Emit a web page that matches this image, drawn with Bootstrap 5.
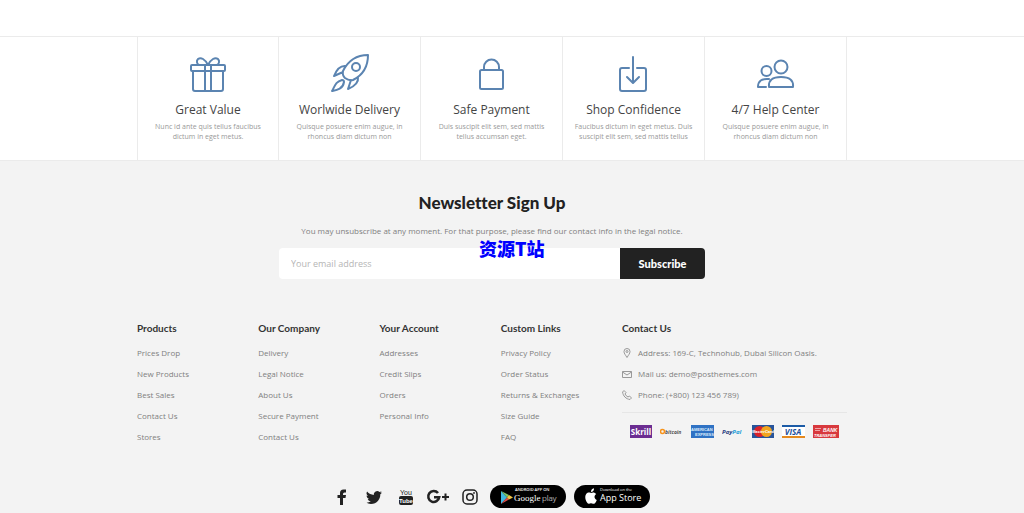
<!DOCTYPE html>
<html lang="en">
<head>
<meta charset="utf-8">
<meta name="viewport" content="width=device-width, initial-scale=1">
<title>Newsletter Sign Up</title>
<link href="https://cdn.jsdelivr.net/npm/bootstrap@5.3.0/dist/css/bootstrap.min.css" rel="stylesheet">
<style>
  body { font-family: "Open Sans", sans-serif; font-size: 8px; line-height: 12px; color: #808080; background: #f3f3f3; overflow-x: hidden; }
  a { color: inherit; text-decoration: none; }
  a:hover { color: #5b84b1; }
  .shell { width: 100%; max-width: 710px; margin: 0 auto; }
  .band { padding-right: 40px; }
  .features { background: #fff; padding-top: 36px; }
  .features-line { border-top: 1px solid #ebebeb; border-bottom: 1px solid #ebebeb; }
  .feature { border-right: 1px solid #ebebeb; padding: 16px 10px 18px; color: #999; }
  .feature:first-child { border-left: 1px solid #ebebeb; }
  .feature svg { width: 40px; height: 40px; fill: none; stroke: #5b84b1; stroke-width: 2; stroke-linejoin: round; stroke-linecap: round; }
  .feature h3 { font-size: 12px; line-height: 16px; font-weight: 400; color: #444; margin: 9px 0 4px; }
  .feature p { font-size: 7px; line-height: 10px; }
  .newsletter { padding-top: 31px; }
  .newsletter h2 { font: 900 17px/22px Lato, sans-serif; font-variant-ligatures: none; color: #222; margin-bottom: 11px; }
  .signup { max-width: 426px; margin: 11px auto 0; height: 31px; }
  .signup .form-control { font-size: 9px; border: 0; border-radius: 4px 0 0 4px; padding: 0 12px; color: #555; }
  .signup .form-control::placeholder { color: #b5b5b5; }
  .signup .btn { width: 85px; background: #222; color: #fff; font: 900 11px/16px Lato, sans-serif; border: 0; border-radius: 0 4px 4px 0; padding: 0; }
  .stamp { position: absolute; left: 200px; top: -10px; font: 900 18px/20px "Noto Sans CJK SC", sans-serif; color: #00f; z-index: 5; white-space: nowrap; }
  .links { display: grid; grid-template-columns: repeat(4, 13fr) 24fr; padding-top: 43px; }
  .links h4 { font: 700 10px/12px Lato, sans-serif; color: #333; margin-bottom: 13px; }
  .links li { line-height: 12px; margin-bottom: 9px; }
  .contact li { display: flex; align-items: center; gap: 6px; }
  .contact li svg { width: 10px; height: 10px; fill: none; stroke: #999; stroke-width: 1; flex: none; }
  .pay { border-top: 1px solid #e6e6e6; margin-top: 11px; padding: 12px 8px 0; gap: 8px; }
  .pay svg { height: 13px; flex: none; }
  .social { padding: 33px 4px 5px 0; gap: 8px; }
  .social a { color: #222; display: flex; }
  .social .glyph { width: 24px; justify-content: center; }
</style>
</head>
<body>
<section class="features">
  <div class="features-line band">
    <div class="shell row row-cols-5 g-0 text-center">
      <div class="col feature">
        <svg viewBox="0 0 40 40"><rect x="3" y="12" width="34" height="6" rx="1"/><path d="M5 18v18q0 2 2 2h26q2 0 2-2V18M17 12v26M23 12v26M20 12C17 6 13 4 10 6c-2 2-1 5 1 6M20 12c3-6 7-8 10-6 2 2 1 5-1 6"/></svg>
        <h3>Great Value</h3>
        <p class="mb-0">Nunc id ante quis tellus faucibus dictum in eget metus.</p>
      </div>
      <div class="col feature">
        <svg viewBox="0 0 40 40"><path d="M38 2C26 2 18 8 13 18q-1 4 2 7 4 3 8 2C33 22 38 14 38 2zM16 13C9 12 6 18 4 23l9-4M28 24c1 7-5 10-10 12l3-9M12 27C5 29 5 33 2 38c5-1 11-2 12-9q0-2-2-2z"/><circle cx="26" cy="14" r="4"/></svg>
        <h3>Worlwide Delivery</h3>
        <p class="mb-0">Quisque posuere enim augue, in rhoncus diam dictum non</p>
      </div>
      <div class="col feature">
        <svg viewBox="0 0 40 40"><rect x="8" y="17" width="23" height="19" rx="1.5"/><path d="M12 17v-3a7.500 7.500 0 0 1 15 0v3"/></svg>
        <h3>Safe Payment</h3>
        <p class="mb-0">Duis suscipit elit sem, sed mattis tellus accumsan eget.</p>
      </div>
      <div class="col feature">
        <svg viewBox="0 0 40 40"><path d="M15 15H8q-2 0-2 2v19q0 2 2 2h22q2 0 2-2V17q0-2-2-2h-7M19 4v25M13 24l6 6 6-6"/></svg>
        <h3>Shop Confidence</h3>
        <p class="mb-0">Faucibus dictum in eget metus. Duis suscipit elit sem, sed mattis tellus</p>
      </div>
      <div class="col feature">
        <svg viewBox="0 0 40 40"><circle cx="25" cy="14" r="6.500"/><circle cx="10.500" cy="18" r="5"/><path d="M13 34q-1-10 12-10t12 10zM13 26Q2 25 2 34h8"/></svg>
        <h3>4/7 Help Center</h3>
        <p class="mb-0">Quisque posuere enim augue, in rhoncus diam dictum non</p>
      </div>
    </div>
  </div>
</section>

<section class="newsletter band text-center">
  <h2>Newsletter Sign Up</h2>
  <p class="mb-0">You may unsubscribe at any moment. For that purpose, please find our contact info in the legal notice.</p>
  <form class="signup d-flex position-relative">
    <span class="stamp">资源T站</span>
    <input class="form-control" type="email" aria-label="Your email address" placeholder="Your email address">
    <button class="btn flex-shrink-0" type="submit">Subscribe</button>
  </form>
</section>

<footer class="band">
  <div class="shell">
    <div class="links">
      <div><h4>Products</h4>
        <ul class="list-unstyled mb-0"><li><a href="#">Prices Drop</a></li><li><a href="#">New Products</a></li><li><a href="#">Best Sales</a></li><li><a href="#">Contact Us</a></li><li><a href="#">Stores</a></li></ul></div>
      <div><h4>Our Company</h4>
        <ul class="list-unstyled mb-0"><li><a href="#">Delivery</a></li><li><a href="#">Legal Notice</a></li><li><a href="#">About Us</a></li><li><a href="#">Secure Payment</a></li><li><a href="#">Contact Us</a></li></ul></div>
      <div><h4>Your Account</h4>
        <ul class="list-unstyled mb-0"><li><a href="#">Addresses</a></li><li><a href="#">Credit Slips</a></li><li><a href="#">Orders</a></li><li><a href="#">Personal Info</a></li></ul></div>
      <div><h4>Custom Links</h4>
        <ul class="list-unstyled mb-0"><li><a href="#">Privacy Policy</a></li><li><a href="#">Order Status</a></li><li><a href="#">Returns &amp; Exchanges</a></li><li><a href="#">Size Guide</a></li><li><a href="#">FAQ</a></li></ul></div>
      <div class="contact"><h4>Contact Us</h4>
        <ul class="list-unstyled mb-0">
          <li><svg viewBox="0 0 10 10"><path d="M5 9.500C3.500 7 2 5.500 2 3.500a3 3 0 0 1 6 0C8 5.500 6.500 7 5 9.500z"/><circle cx="5" cy="3.500" r="1"/></svg>Address: 169-C, Technohub, Dubai Silicon Oasis.</li>
          <li><svg viewBox="0 0 10 10"><path d="M.5 2.500h9v6h-9zM.5 3 5 6l4.500-3"/></svg>Mail us: demo@posthemes.com</li>
          <li><svg viewBox="0 0 10 10"><path d="M2 .5.600 2C1 6 4 9 8 9.500L9.500 8 7.500 6 6 7Q4 6 3 4l1-1.500z"/></svg>Phone: (+800) 123 456 789)</li>
        </ul>
        <div class="pay d-flex">
          <svg width="22" viewBox="0 0 22 13" role="img" aria-label="Skrill"><path fill="#6b2d91" d="M0 0h22v13H0z"/><text x="11" y="9.500" text-anchor="middle" font-family="Open Sans" font-weight="700" font-size="8" fill="#fff">Skrill</text></svg>
          <svg width="23" viewBox="0 0 23 13" role="img" aria-label="bitcoin"><circle cx="2.500" cy="6.500" r="2" fill="none" stroke="#f7931a" stroke-width="1.500"/><text x="5" y="8.500" font-family="Open Sans" font-weight="700" font-style="italic" font-size="5" fill="#555">bitcoin</text></svg>
          <svg width="23" viewBox="0 0 23 13" role="img" aria-label="American Express"><path fill="#2f72c4" d="M0 0h23v13H0z"/><g font-family="Liberation Sans" font-weight="700" font-size="4" fill="#dcebfa"><text x="0" y="6">AMERICAN</text><text x="4" y="11">EXPRESS</text></g></svg>
          <svg width="22" viewBox="0 0 22 13" role="img" aria-label="PayPal"><g font-family="Open Sans" font-weight="700" font-style="italic" font-size="6"><text x="0" y="8.500" fill="#253b80">Pay<tspan fill="#179bd7">Pal</tspan></text></g></svg>
          <svg width="22" viewBox="0 0 22 13" role="img" aria-label="MasterCard"><path fill="#27549b" d="M0 0h22v13H0z"/><circle cx="7.500" cy="6.500" r="5.500" fill="#d9222a"/><circle cx="14.500" cy="6.500" r="5.500" fill="#f2a51f"/><text x="11" y="8" text-anchor="middle" font-family="Liberation Sans" font-weight="700" font-style="italic" font-size="4" fill="#fff">MasterCard</text></svg>
          <svg width="23" viewBox="0 0 23 13" role="img" aria-label="Visa"><path fill="#fff" d="M0 0h23v13H0z"/><path fill="#1c5ba6" d="M0 0h23v2H0z"/><path fill="#e58a1f" d="M0 11h23v2H0z"/><text x="11" y="9.500" text-anchor="middle" font-family="Open Sans" font-weight="700" font-style="italic" font-size="8" fill="#1c4f9c">VISA</text></svg>
          <svg width="26" viewBox="0 0 26 13" role="img" aria-label="Bank transfer"><path fill="#d8393e" d="M0 0h26v13H0z"/><path stroke="#f0a5a7" d="M2 3.500h6M2 5.500h5"/><g font-family="Liberation Sans" font-weight="700" font-style="italic" font-size="5" fill="#fff"><text x="10" y="7">BANK</text><text x="1" y="12" font-size="4">TRANSFER</text></g></svg>
        </div>
      </div>
    </div>
    <div class="social d-flex justify-content-center align-items-center">
      <a class="glyph" href="#" aria-label="Facebook"><svg width="16" height="16" viewBox="0 0 16 16" fill="currentColor"><path d="M6 16V9H3.500V6H6V4Q6 .5 9.500.5H12v3h-1.500Q9 3.500 9 5v1h3l-.5 3H9v7z"/></svg></a>
      <a class="glyph" href="#" aria-label="Twitter"><svg width="16" height="16" viewBox="0 0 16 16" fill="currentColor"><path d="M5 15c6 0 9.300-5 9.300-9.300v-.4A7 7 0 0 0 16 3.500a7 7 0 0 1-1.900.5 3.300 3.300 0 0 0 1.400-1.800 7 7 0 0 1-2 .8 3.300 3.300 0 0 0-5.600 3A9.300 9.300 0 0 1 1.100 2.600a3.300 3.300 0 0 0 1 4.400 3 3 0 0 1-1.500-.4c0 1.600 1.100 3 2.600 3.300a3 3 0 0 1-1.500 0 3.300 3.300 0 0 0 3.100 2.300A7 7 0 0 1 0 13.600 9 9 0 0 0 5 15z"/></svg></a>
      <a class="glyph" href="#" aria-label="YouTube"><svg width="16" height="18" viewBox="0 0 16 18"><rect x="1" y="8" width="14" height="9" rx="2" fill="#222"/><g font-family="Liberation Sans Narrow, Liberation Sans" text-anchor="middle"><text x="8" y="7" font-size="7" fill="#222">You</text><text x="8" y="15" font-size="6" font-weight="700" fill="#fff">Tube</text></g></svg></a>
      <a class="glyph" href="#" aria-label="Google Plus"><svg width="24" height="16" viewBox="0 0 24 16" fill="none" stroke="#222"><path stroke-width="2.600" d="M12 4A5.500 5.500 0 1 0 13.200 8.200H8"/><path stroke-width="2" d="M19.500 4.500v7M16 8h7"/></svg></a>
      <a class="glyph" href="#" aria-label="Instagram"><svg width="16" height="16" viewBox="0 0 16 16" fill="none" stroke="#222" stroke-width="1.500"><rect x="1" y="1" width="14" height="14" rx="4"/><circle cx="8" cy="8" r="3.300"/><circle cx="12" cy="4" r=".3"/></svg></a>
      <a href="#" aria-label="Google Play"><svg width="76" height="23" viewBox="0 0 76 23"><rect width="76" height="23" rx="11.500" fill="#000"/><path fill="#41b8e0" d="M11 6v13l6-6.500z"/><path fill="#7ac36a" d="m11 6 6 6.500 2-2.500z"/><path fill="#e0514b" d="m11 19 6-6.500 2 2z"/><path fill="#f3c544" d="m17 12.500 2-2.500 4 2.500-4 2z"/><g fill="#fff"><text x="25" y="6" font-family="Open Sans" font-weight="600" font-size="4">ANDROID APP ON</text><text x="24" y="15.500" font-family="Liberation Serif" font-size="9">Google</text><text x="52" y="15.500" font-family="Open Sans" font-weight="300" font-size="8">play</text></g></svg></a>
      <a href="#" aria-label="App Store"><svg width="76" height="23" viewBox="0 0 76 23"><rect width="76" height="23" rx="11.500" fill="#000"/><path fill="#fff" d="M17 8c2-1 4-.5 5.200 1-2.500 1.500-2 5 .6 6-1.300 3.500-3 4.500-4.600 3.500q-1.200-.6-2.500 0c-3 1.500-6-6.500-3.500-9.500 1.300-1.500 3-1.700 4.800-1zM17 7c0-2 1-3.300 3-3.700C20.200 5.500 18.800 7 17 7z"/><g fill="#fff" font-family="Open Sans"><text x="26" y="6" font-size="4">Download on the</text><text x="26" y="15.500" font-weight="500" font-size="9">App Store</text></g></svg></a>
    </div>
  </div>
</footer>
<script src="https://cdn.jsdelivr.net/npm/bootstrap@5.3.0/dist/js/bootstrap.bundle.min.js"></script>
</body>
</html>
